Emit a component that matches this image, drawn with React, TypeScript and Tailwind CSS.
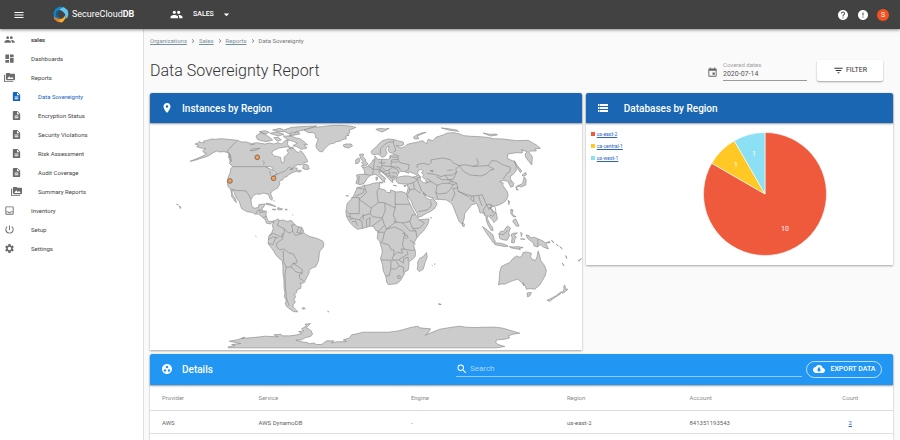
import React from 'react';
import {
  MdArrowDropDown,
  MdChevronRight,
  MdCloudDownload,
  MdDashboard,
  MdDescription,
  MdError,
  MdEvent,
  MdFilterList,
  MdGroup,
  MdGroupWork,
  MdHelp,
  MdLocationOn,
  MdMenu,
  MdOutlineInbox,
  MdPermMedia,
  MdPowerSettingsNew,
  MdSearch,
  MdSettings,
  MdStorage,
} from 'react-icons/md';
import type { IconType } from 'react-icons';

type NavItem = { label: string; icon: IconType; child?: boolean; active?: boolean; bold?: boolean };

const navItems: NavItem[] = [
  { label: 'sales', icon: MdGroup, bold: true },
  { label: 'Dashboards', icon: MdDashboard },
  { label: 'Reports', icon: MdPermMedia },
  { label: 'Data Sovereignty', icon: MdDescription, child: true, active: true },
  { label: 'Encryption Status', icon: MdDescription, child: true },
  { label: 'Security Violations', icon: MdDescription, child: true },
  { label: 'Risk Assessment', icon: MdDescription, child: true },
  { label: 'Audit Coverage', icon: MdDescription, child: true },
  { label: 'Summary Reports', icon: MdPermMedia, child: true },
  { label: 'Inventory', icon: MdOutlineInbox },
  { label: 'Setup', icon: MdPowerSettingsNew },
  { label: 'Settings', icon: MdSettings },
];

const Logo: React.FC = () => (
  <svg viewBox="0 0 50 52" className="h-[17px] w-4" aria-hidden="true">
    <path d="M20 2 L34 3 L46 13 L48 26 L45 36 L38 40 C41 28 37 16 20 12 L14 13 Z" fill="#5ec6ef" />
    <path d="M20 2 L32 3 C24 6 16 12 14 21 C12 30 17 36 24 39 L14 41 L4 34 L1 22 L7 9 Z" fill="#1583c4" />
    <path d="M14 13 L20 12 C13 20 12 30 20 36 L10 33 C7 25 8 18 14 13 Z" fill="#0f5f96" />
    <path d="M2 32 C9 40 22 43 32 37 L38 28 C40 38 36 46 27 51 L15 49 L5 41 Z" fill="#fbb02a" />
    <path d="M2 32 C9 40 16 41 24 40 L17 50 L6 42 Z" fill="#f07c22" />
  </svg>
);

const Header: React.FC = () => (
  <header className="relative z-10 flex h-[29px] items-center bg-[#424242] pr-[11px] pl-[13px] text-white shadow-[0_1px_3px_rgba(0,0,0,0.45)]">
    <button aria-label="Menu" className="mr-7">
      <MdMenu className="size-3" />
    </button>
    <a href="#home" className="flex w-[117px] items-center gap-[3px] text-[9px]">
      <Logo />
      <span>
        SecureCloud<b>DB</b>
      </span>
    </a>
    <button className="flex items-center text-[7px] font-medium">
      <MdGroup className="mr-[10px] size-[13px]" />
      SALES
      <MdArrowDropDown className="ml-[6px] size-[13px]" />
    </button>
    <div className="ml-auto flex items-center gap-2">
      <button aria-label="Help">
        <MdHelp className="size-3" />
      </button>
      <button aria-label="Alerts">
        <MdError className="size-3" />
      </button>
      <button className="size-3 rounded-full bg-[#f4511e] text-[7px] leading-3" aria-label="Account">
        S
      </button>
    </div>
  </header>
);

const Sidebar: React.FC = () => (
  <nav className="w-36 shrink-0 border-r border-[#e0e0e0] bg-white pt-px">
    <ul>
      {navItems.map(({ label, icon: Icon, child, active, bold }) => (
        <li key={label}>
          <a
            href="#nav"
            className={`flex h-[19px] items-center gap-4 text-[6px] ${child ? 'pl-[11px]' : 'pl-1'} ${
              active ? 'text-[#1565c0]' : 'text-[#444]'
            } ${bold ? 'font-bold' : ''}`}
          >
            <Icon className={`size-[11px] ${active ? '' : 'text-[#6b6b6b]'}`} />
            {label}
          </a>
        </li>
      ))}
    </ul>
  </nav>
);

const CardHeader: React.FC<{ icon: IconType; title: string; wide?: boolean }> = ({ icon: Icon, title, wide }) => (
  <div
    className={`relative flex h-[30px] items-center rounded-t-xs bg-[#1a66b2] pl-[11px] text-white shadow-[0_1px_2px_rgba(0,0,0,0.4)] ${
      wide ? 'gap-[15px]' : 'gap-[9px]'
    }`}
  >
    <Icon className="size-3" />
    <h2 className="text-[10px] font-medium">{title}</h2>
  </div>
);

const WorldMap: React.FC = () => (
  <svg viewBox="0 9 1296 681" className="block w-full" role="img" aria-label="World map">
    <g fill="#cccccc" stroke="#858585" strokeWidth="1.8" strokeLinejoin="round">
      {/* north america */}
      <path d="M135 72L142 70L148 64L153 68L163 68L161 63L168 62L185 57L195 58L215 56L235 58L262 61L275 66L290 66L305 71L320 68L345 72L360 69L372 72L384 68L395 72L405 62L415 60L412 72L418 80L400 82L385 85L370 92L366 98L368 104L374 108L384 110L392 112L394 124L398 130L403 122L402 112L412 104L415 98L411 90L420 85L432 86L438 94L445 98L452 92L457 96L465 108L474 125L462 129L455 135L444 134L432 140L420 150L432 143L442 144L440 150L455 152L448 157L440 154L430 157L415 165L410 171L402 172L398 180L392 182L388 186L390 192L384 203L374 209L365 215L362 222L368 236L365 241L360 236L356 224L345 220L335 220L332 223L318 222L308 230L303 240L305 256L312 265L325 263L327 254L345 252L343 258L338 265L335 272L350 274L348 284L352 298L358 305L372 303L374 310L367 307L362 312L350 310L345 298L340 294L335 290L325 282L316 283L308 278L290 275L275 266L272 258L268 245L260 235L255 225L252 213L246 212L247 221L250 228L256 236L260 248L255 244L250 236L245 230L245 222L242 207L234 200L232 182L236 168L240 160L243 145L248 140L239 131L240 120L235 110L240 102L234 98L222 95L205 96L203 92L190 98L175 108L160 113L150 116L135 121L120 124L150 112L162 106L170 100L163 99L158 92L168 86L152 84L140 80L147 76Z" />
      <path d="M318 48L332 38L348 44L360 53L368 60L350 65L332 62L322 58ZM328 35L345 32L358 37L345 42ZM360 40L380 36L402 43L385 48ZM368 30L390 25L402 30L425 22L450 20L500 18L480 24L462 30L440 35L432 42L416 41L405 35L386 35ZM400 48L424 48L438 54L450 56L466 68L473 75L462 74L471 84L455 88L440 80L429 77L442 70L430 64L412 59ZM372 53L386 52L394 60L382 64ZM416 82L430 82L425 88ZM418 48L450 42L446 36L424 38ZM462 132L474 135L478 147L469 149L458 145ZM236 101L242 108L244 125L240 117Z" />
      <path d="M462 30L478 26L490 22L515 20L540 17L570 16L600 18L618 22L610 26L598 30L600 38L592 43L598 46L587 49L590 56L578 59L572 63L560 65L552 70L540 72L533 78L525 85L517 96L508 94L500 85L498 75L502 65L505 56L497 53L497 45L490 38L475 38Z M580 75L588 72L604 72L608 78L596 84L583 81Z" />
      <path d="M348 250L360 251L378 260L366 257L348 253ZM367 268L377 268L375 271ZM384 263L398 267L394 270L383 269ZM405 268L412 268L410 271ZM371 241L374 244ZM80 253L85 255ZM88 258L93 262L91 266ZM317 349L319 350ZM428 284L429 286Z" />
      {/* south america */}
      <path d="M372 303L378 300L385 297L388 302L400 300L410 304L425 302L435 315L444 320L455 322L460 330L462 340L472 346L480 350L500 355L518 363L522 372L520 382L511 392L508 402L507 415L505 425L498 440L485 445L478 452L477 460L472 470L466 482L462 488L455 491L450 489L454 495L452 506L442 509L440 518L434 522L437 531L432 538L436 547L429 555L430 561L444 576L430 575L419 567L410 560L406 550L409 542L403 530L405 520L402 500L402 480L399 460L399 440L397 423L387 415L378 405L372 395L365 385L355 372L355 362L357 348L366 337L370 326L367 317Z" />
      <path d="M456 565L463 563L466 566L459 568ZM533 574L537 576Z" />
      {/* antarctica */}
      <path d="M235 681L255 677L245 674L272 671L238 664L262 660L285 652L274 656L330 651L345 649L385 651L372 645L393 643L395 648L420 648L440 645L456 641L446 635L462 633L455 627L470 618L465 613L482 611L469 623L484 633L488 643L482 650L467 653L455 660L438 661L456 666L472 668L480 672L490 669L500 674L515 674L530 663L552 663L545 670L558 666L590 665L580 660L598 655L605 645L620 642L640 637L690 637L715 637L740 634L750 632L785 622L805 619L810 624L842 627L836 638L826 646L850 636L870 628L900 623L930 619L948 622L975 623L1000 622L1040 622L1060 625L1080 631L1110 640L1090 643L1075 648L1080 654L1065 658L1040 660L1038 668L1045 674L1065 680L1040 684L235 684Z" />
    </g>
    <g transform="translate(540 0)" fill="#cccccc" stroke="#858585" strokeWidth="1.8" strokeLinejoin="round">
      {/* africa */}
      <path d="M82 203L95 200L102 196L115 195L130 190L143 188L150 190L148 205L165 210L170 217L182 218L182 210L200 216L215 215L225 218L232 226L235 240L240 250L247 265L258 285L268 300L283 298L298 297L295 310L290 320L280 334L265 348L259 357L252 370L253 384L257 395L256 410L248 418L238 425L237 439L235 450L224 457L222 465L212 482L204 489L195 492L175 494L170 486L168 470L160 452L158 435L152 415L156 402L157 390L152 375L150 365L142 356L143 346L145 334L138 332L130 318L116 320L100 325L82 328L73 321L62 310L55 300L50 290L48 275L50 262L52 250L62 240L70 230L75 219Z" />
      <path d="M290 398L292 412L286 428L280 448L268 455L262 448L264 437L263 427L270 415L280 410Z M306 436L308 437ZM313 433L316 432ZM302 293L306 294ZM48 227L56 228Z" />
      {/* eurasia */}
      <path d="M78 190L82 176L80 165L92 163L105 163L103 150L97 142L107 142L115 138L125 128L129 120L135 118L135 108L140 113L142 118L160 118L174 119L180 115L180 107L193 104L190 100L180 98L175 92L178 78L170 82L168 92L172 100L165 109L156 112L150 105L142 102L130 105L124 98L125 92L140 80L148 70L160 61L175 57L190 58L203 62L220 66L222 74L213 78L199 77L213 84L225 80L232 73L245 70L265 66L277 62L283 65L290 72L295 58L310 62L318 52L340 45L352 39L372 38L390 42L402 47L425 49L450 50L472 52L490 56L520 57L560 62L595 61L608 68L620 75L632 85L615 87L620 93L602 93L598 98L608 110L606 135L596 123L588 112L586 102L592 95L580 91L577 99L560 98L535 102L532 115L543 120L556 126L560 140L559 153L548 165L541 170L543 180L552 190L550 199L543 202L538 192L535 184L520 181L510 185L520 189L519 196L525 205L533 216L535 228L530 240L520 249L505 256L495 258L484 261L482 267L500 280L503 298L492 308L489 301L480 293L474 287L472 295L479 310L488 322L490 332L484 331L476 318L470 303L468 290L462 280L450 278L447 265L440 250L425 255L418 264L405 280L403 297L397 313L388 305L378 280L368 255L362 248L350 240L325 238L316 238L310 233L300 232L285 225L280 219L290 235L303 240L308 235L322 250L315 265L303 274L290 280L275 289L265 292L262 280L250 260L245 245L236 232L230 220L235 205L232 192L220 192L205 190L199 184L198 175L210 170L225 168L235 168L248 172L262 168L258 163L246 158L238 155L236 160L225 155L212 154L206 160L202 170L195 174L192 181L188 177L189 188L183 184L176 175L167 166L155 155L148 158L155 165L168 176L163 180L165 187L157 182L151 174L144 168L137 163L122 166L112 175L107 184L102 191L90 194Z" />
      <path d="M89 103L101 102L99 110L106 117L109 128L115 131L108 137L94 139L101 133L95 129L100 124L92 116ZM78 119L87 114L90 122L85 130L77 131ZM138 28L150 25L165 27L178 25L165 32L158 36L148 33ZM250 52L260 45L275 39L289 37L262 48L267 56L254 57ZM335 24L355 26L380 30L386 34L360 31ZM460 39L480 43L500 42L503 45L482 48ZM574 90L578 89ZM138 172L143 172L142 180L139 181ZM148 187L160 187L157 190ZM190 196L200 198ZM222 197L230 195L225 201ZM398 307L404 313L403 320L398 318Z" />
      <path d="M553 122L562 136L576 153L572 158L560 140ZM577 165L588 157L590 164L580 169ZM583 171L589 178L588 195L575 201L565 199L561 203L559 209L566 210L558 202L560 199L578 191L581 181ZM535 241L540 245L537 254ZM543 268L550 270L547 281L553 287L559 291L550 290L543 280ZM551 300L558 297L563 307L568 318L560 319L554 311L549 306ZM478 263L484 263L481 267Z" />
      <path d="M266 151L275 148L280 152L275 158L282 164L278 170L284 177L288 180L290 189L281 188L272 181L270 170L263 160Z" fill="#fff" />
      <path d="M232 348L226 348L227 356L233 354Z" fill="#fff" />
      <path d="M300 151L310 151L308 157ZM352 151L370 150" fill="none" />
      {/* country borders */}
      <g fill="none">
        <path d="M80 203L103 208L101 218L76 229M103 198L110 218L88 238L124 264L145 248L141 215L146 206M64 233H88V281H58L50 274M124 264L121 281L98 288L88 300L63 294M163 248L145 248M163 248L196 264V216M196 253H240M165 249L166 272L157 294L128 290L121 281M196 264L190 285L199 306L191 311L170 328L162 310L157 294M199 306L219 309L240 304L247 285L258 284M240 304L248 325L268 325L284 309L268 300M248 325L258 333L261 352M258 333L240 333L232 325L219 309M170 328L194 321L218 332L225 340L220 360L218 377L224 388L248 392L256 389M162 318L143 337M143 337L164 337L170 328M164 337L158 362L154 368L177 375L184 390H192V406L203 397L218 400L214 387L224 388M192 406L187 415L192 421L153 420M192 421L207 420L217 412L235 403L231 394M207 420L221 429L221 416L235 412L235 424M183 423V446L178 468L167 468M183 446L197 448L208 438L221 442L221 458M208 438L199 424M240 361L258 373M225 340L236 354M51 288L62 291M66 306L77 303L83 318M98 326L96 304L88 300M111 322L109 300L121 293M119 318L121 293M128 318L143 306L155 298M59 299L70 295M192 302L200 310M203 468L210 467L212 474L205 476ZM60 281L61 295M100 282V300M217 340H225" />
        <path d="M88 168L86 190M105 163L122 166M115 138L130 148L128 165M130 148L150 148L156 137L183 140L185 120M135 119L132 135L130 148M156 137L155 119M150 148L158 156L177 150L188 142L202 148L206 158M158 156L168 162L179 160L177 150M179 160L182 174L194 172M168 162L174 170L180 166M183 140L206 142L212 150M185 120L205 118L210 128L238 134L236 148L226 155M205 118L205 107L193 104M180 111L203 112M191 96L198 92L190 66L176 66L165 73L152 86L151 103M190 66L193 60M158 143L165 150M140 140L152 142M145 153L158 150M146 127L158 130L167 128M184 157L202 160M185 168L198 169M186 127L206 125" />
        <path d="M262 144L262 134L279 130L297 134L305 127L303 120L338 114L361 119L371 129L388 137L377 148L381 155L368 165L346 166L333 170L318 164L291 160M388 137L405 134L430 139L442 137L446 129L440 114M430 139L455 138L475 137L486 122L500 123L518 134L542 142L540 155L532 160L520 178M475 137L493 148L480 151L470 162L453 168L420 165L402 155L388 137M262 174L272 172M262 174L266 190L271 201L274 212L291 226M262 181L250 188L233 193M250 188L254 207L272 220M254 207L240 210L234 222M240 210L238 202M289 188L304 185L322 196L318 218L325 238M304 185L291 174M322 196L338 190L356 190L371 194L362 208L350 219L328 222L318 218M356 190L365 182L381 190L371 194M381 155L370 178L338 180L320 170M346 166L356 180L370 188M381 190L385 214L405 222L425 228L432 228L446 226L451 244L457 258M425 228L422 238L433 245L431 228M365 243L375 222L370 206L385 203M385 214L418 232M457 224L470 254L460 270L466 288M470 254L482 253L497 263L498 278L489 289L480 286M482 253L490 280M470 254L478 270M447 226L457 224M265 275L293 270L304 258L303 244M265 164L275 173M247 170L264 180M540 188L545 184" />
      </g>
    </g>
    <g transform="translate(630 330)" fill="#cccccc" stroke="#858585" strokeWidth="1.8" strokeLinejoin="round">
      {/* oceania and the islands */}
      <path d="M416 165L418 152L419 138L420 125L425 110L438 103L450 98L459 86L470 78L480 82L485 80L490 68L500 66L515 70L512 80L517 88L527 92L532 80L535 63L540 78L543 92L553 105L560 122L556 138L548 152L540 165L525 178L510 176L500 178L495 166L490 158L493 168L486 158L474 148L460 152L445 158L435 163L425 162Z" />
      <path d="M502 189L515 188L510 198L503 201ZM562 211L573 206L588 198L599 189L607 185L601 193L582 205L570 214ZM612 170L615 165L618 178L625 178L614 187L608 190L613 178Z" />
      <path d="M368 -10L376 -5L388 5L399 14L403 28L407 36L400 38L392 26L379 8ZM404 39L416 39L435 43L445 49L435 50L413 46L404 43ZM449 50L462 51L474 50L490 53L478 56L482 59L455 54ZM417 12L423 4L431 4L443 -12L452 -6L447 8L449 18L442 31L432 30L420 26ZM454 14L460 10L473 9L463 16L470 21L465 28L463 39L455 38L457 24ZM483 7L487 11L485 20ZM482 27L496 28ZM499 15L508 17L512 24L523 22L535 27L548 32L558 40L566 57L552 52L542 44L532 51L523 48L520 38L510 31L503 25ZM558 39L570 34L570 39ZM575 30L582 39ZM590 43L596 49ZM600 50L608 57ZM618 77L621 86ZM607 99L613 108ZM655 93L665 86L660 92ZM235 222L244 224ZM240 221V225" />
      <path d="M534 27V51M417 12L430 14L445 1" fill="none" />
    </g>
    <g fill="none" stroke="#858585" strokeWidth="1.8" strokeLinejoin="round">
      <path d="M262 61L231 94L240 102L242 112M248 140H348L360 145M375 166L392 158L405 154L418 141L430 151M242 207L263 212H276L288 213L296 224L302 237M317 281L325 270H334M328 271L331 278L345 275M340 292L350 290" />
      <path d="M388 302L382 316L402 326L404 333L400 345L398 357L382 368L379 379L389 390L401 387L416 398L431 403L442 424L439 430L429 430L424 441L409 442L401 425L400 392M355 359L368 351L385 354M358 348L370 340L394 352L398 341M355 370L369 374L378 352M409 442L405 465L407 503L410 535L417 557M429 430L442 438L457 449L457 460L448 465L449 475M424 441L438 456L457 460M449 475L461 483L466 488M402 326L417 340L429 334L425 315L436 315M429 334L437 347L458 340M446 321L441 338L458 340M455 322L452 338" />
      <path d="M300 92L309 87L330 85L312 92ZM300 75L315 72M338 122L343 127L341 134" />
      <path d="M348 142L361 139L370 146L366 149ZM359 153L362 167M368 151L376 154L380 163M370 168L382 163" fill="#fff" />
    </g>
    <g fill="#f3a15b" stroke="#5f4632" strokeWidth="2">
      <circle cx="322" cy="112" r="7" />
      <circle cx="240" cy="183" r="7" />
      <circle cx="371" cy="175" r="7" />
    </g>
  </svg>
);

const legend = [
  { name: 'us-east-2', color: 'bg-[#ef5a3c]' },
  { name: 'ca-central-1', color: 'bg-[#ffc824]' },
  { name: 'us-west-1', color: 'bg-[#8be0f4]' },
];

const PieChart: React.FC = () => (
  <svg viewBox="-62 -62 124 124" className="size-[124px]" role="img" aria-label="Databases by region">
    <g stroke="#fff" strokeWidth="0.6">
      <path d="M0 0V-61.5A61.5 61.5 0 1 1 -53.26 -30.75Z" fill="#ef5a3c" />
      <path d="M0 0L-53.26 -30.75A61.5 61.5 0 0 1 -30.75 -53.26Z" fill="#ffc824" />
      <path d="M0 0L-30.75 -53.26A61.5 61.5 0 0 1 0 -61.5Z" fill="#8be0f4" />
    </g>
    <g fill="#fff" fontSize="7" textAnchor="middle">
      <text x="20" y="37">10</text>
      <text x="-29" y="-27">1</text>
      <text x="-11" y="-38">1</text>
    </g>
  </svg>
);

const Details: React.FC = () => (
  <section className="mt-1 flex-1 bg-white shadow-[0_1px_2px_rgba(0,0,0,0.3)]">
    <div className="relative flex h-[31px] items-center rounded-t-xs bg-[#2196f3] px-[11px] text-white shadow-[0_1px_2px_rgba(0,0,0,0.4)]">
      <MdGroupWork className="mr-[9px] size-3" />
      <h2 className="text-[10px] font-medium">Details</h2>
      <label className="ml-auto flex h-4 w-[48%] items-center gap-[2px] border-b border-white/50">
        <MdSearch className="size-3" />
        <input
          type="search"
          aria-label="Search"
          placeholder="Search"
          className="min-w-0 flex-1 text-[8px] outline-none placeholder:text-white/60"
        />
      </label>
      <button className="ml-1 flex h-[17px] w-[76px] shrink-0 items-center justify-center gap-[6px] rounded-full border border-white/70 text-[7px] font-medium">
        <MdCloudDownload className="size-3" />
        EXPORT DATA
      </button>
    </div>
    <table className="w-full table-fixed text-left text-[6px] text-[#5f5f5f]">
      <thead>
        <tr className="h-[26px] border-b border-[#dcdcdc] text-[#8a8a8a]">
          <th className="w-[13%] pl-3 font-normal">Provider</th>
          <th className="w-[20.5%] pl-3 font-normal">Service</th>
          <th className="w-[21%] pl-3 font-normal">Engine</th>
          <th className="w-[16.5%] pl-3 font-normal">Region</th>
          <th className="pl-3 font-normal">Account</th>
          <th className="w-[11.5%] text-center font-normal">Count</th>
        </tr>
      </thead>
      <tbody>
        <tr className="h-[23px] border-b border-[#e0e0e0]">
          <td className="pl-3">AWS</td>
          <td className="pl-3">AWS DynamoDB</td>
          <td className="pl-3">-</td>
          <td className="pl-3">us-east-2</td>
          <td className="pl-3">841351193543</td>
          <td className="text-center">
            <a href="#count" className="text-[#2a62bd] underline">
              2
            </a>
          </td>
        </tr>
      </tbody>
    </table>
  </section>
);

const App: React.FC = () => {
  return (
    <div className="flex min-h-screen flex-col bg-[#fafafa] font-['Roboto',sans-serif] text-[#333]">
      <Header />
      <div className="flex flex-1">
        <Sidebar />
        <main className="flex min-w-0 flex-1 flex-col pr-[7px] pl-[6px]">
          <nav aria-label="Breadcrumb" className="flex h-[23px] items-center gap-[2px] text-[6px] text-[#777]">
            {['Organizations', 'Sales', 'Reports'].map((crumb) => (
              <React.Fragment key={crumb}>
                <a href="#crumb" className="text-[#78909c] underline">
                  {crumb}
                </a>
                <MdChevronRight className="size-2" />
              </React.Fragment>
            ))}
            <span>Data Sovereignty</span>
          </nav>

          <div className="mt-2 mb-3 flex h-[21px] items-center pr-[10px]">
            <h1 className="text-[16px] font-light">Data Sovereignty Report</h1>
            <MdEvent className="mt-1 mr-[5px] ml-auto size-[11px] text-[#666]" />
            <label className="w-[84px] text-[6px] leading-[7px] text-[#9e9e9e]">
              Covered dates
              <input
                type="text"
                defaultValue="2020-07-14"
                className="block h-[13px] w-full border-b border-[#999] text-[7px] text-[#555] outline-none"
              />
            </label>
            <button className="ml-[10px] flex h-[21px] w-[66px] items-center justify-center gap-[2px] rounded-xs bg-white text-[7px] shadow-[0_1px_2px_rgba(0,0,0,0.35)]">
              <MdFilterList className="size-[11px]" />
              FILTER
            </button>
          </div>

          <div className="grid grid-cols-12 items-start gap-1">
            <section className="col-span-7 bg-white shadow-[0_1px_2px_rgba(0,0,0,0.35)]">
              <CardHeader icon={MdLocationOn} title="Instances by Region" />
              <WorldMap />
            </section>
            <section className="col-span-5 bg-white shadow-[0_1px_2px_rgba(0,0,0,0.35)]">
              <CardHeader icon={MdStorage} title="Databases by Region" wide />
              <div className="flex py-[9px] pl-[5px]">
                <ul className="w-[112px] text-[5px]">
                  {legend.map((item) => (
                    <li key={item.name} className="flex h-3 items-start gap-[2px] leading-none">
                      <span className={`size-1 ${item.color}`} />
                      <a href="#region" className="text-[#2a62bd] underline">
                        {item.name}
                      </a>
                    </li>
                  ))}
                </ul>
                <PieChart />
              </div>
            </section>
          </div>

          <Details />
        </main>
      </div>
    </div>
  );
};

export default App;
